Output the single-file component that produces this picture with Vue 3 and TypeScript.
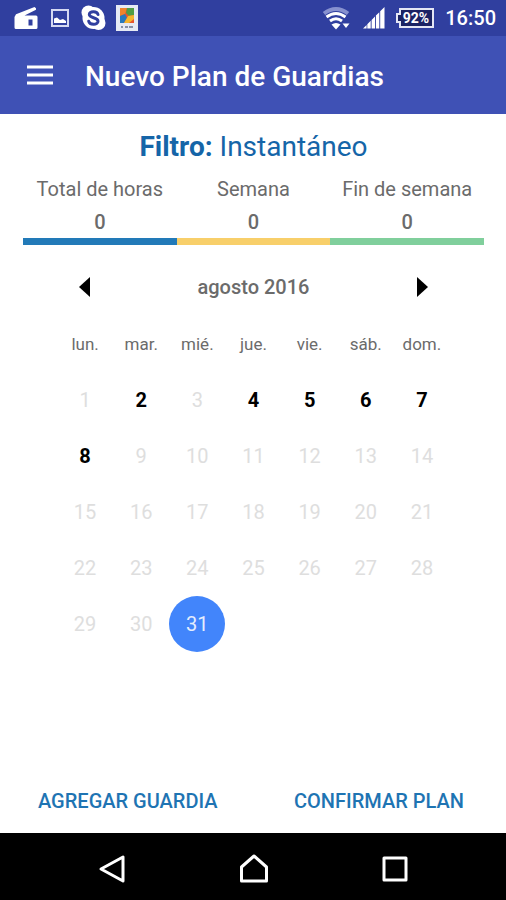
<script setup lang="ts">
import { computed, ref } from 'vue'

interface Total {
  label: string
  value: number
  tone: string
}

const totals: Total[] = [
  { label: 'Total de horas', value: 0, tone: 'blue' },
  { label: 'Semana', value: 0, tone: 'yellow' },
  { label: 'Fin de semana', value: 0, tone: 'green' },
]

const weekdays = ['lun.', 'mar.', 'mié.', 'jue.', 'vie.', 'sáb.', 'dom.']
const months = ['enero', 'febrero', 'marzo', 'abril', 'mayo', 'junio', 'julio', 'agosto', 'septiembre', 'octubre', 'noviembre', 'diciembre']
const shiftDays = new Set([2, 4, 5, 6, 7, 8])

const shown = ref(new Date(2016, 7, 1))
const selected = ref(31)

const monthLabel = computed(() => `${months[shown.value.getMonth()]} ${shown.value.getFullYear()}`)

const weeks = computed(() => {
  const year = shown.value.getFullYear()
  const month = shown.value.getMonth()
  const lead = (new Date(year, month, 1).getDay() + 6) % 7
  const count = new Date(year, month + 1, 0).getDate()
  const rows: (number | null)[][] = []
  for (let start = 1 - lead; start <= count; start += 7) {
    rows.push(weekdays.map((_, i) => (start + i >= 1 && start + i <= count ? start + i : null)))
  }
  return rows
})

function moveMonth(step: number) {
  shown.value = new Date(shown.value.getFullYear(), shown.value.getMonth() + step, 1)
}
</script>

<template>
  <div class="screen">
    <div class="status">
      <div class="status-group left">
        <svg width="26" height="26" viewBox="0 0 26 26" aria-hidden="true">
          <path fill="#fff" fill-rule="evenodd" d="M1.500 12 3 9.200 21.500 2l1.500 1.200v1.600L11.500 10.500H23a1.500 1.500 0 0 1 1.500 1.500v10.500A1.500 1.500 0 0 1 23 24H3a1.500 1.500 0 0 1-1.500-1.500zM15.500 14.500v6h4v-6z" />
        </svg>
        <svg class="picture" width="18" height="18" viewBox="0 0 18 18" aria-hidden="true">
          <rect x="1" y="1" width="16" height="16" fill="none" stroke="#d5d9f2" stroke-width="2" />
          <path fill="#fff" d="M3 14V9.500l3-1 3 2.500 3-1 3 2v2z" />
        </svg>
        <svg width="26" height="26" viewBox="0 0 26 26" aria-hidden="true">
          <circle cx="7.500" cy="7.500" r="7" fill="#fff" />
          <circle cx="17.500" cy="18" r="7" fill="#fff" />
          <circle cx="12.500" cy="13" r="11" fill="#fff" />
          <path d="M17 9.500C16 5.500 8 6 8.300 9.700c.3 3.800 8.700 2.300 8.700 6.500 0 4.300-8.500 4-9.300.1" fill="none" stroke="#303f9f" stroke-width="3" stroke-linecap="round" />
        </svg>
        <svg class="photo" width="24" height="26" viewBox="0 0 24 26" aria-hidden="true">
          <rect x="1" y="0" width="22" height="26" fill="#e6eaf4" />
          <rect x="5" y="3" width="14" height="15" fill="#e8552d" />
          <path fill="#ef842c" d="M5 3h7l-2 6-5 2z" />
          <path fill="#4f9d45" d="M12 3h7v7l-5 1-3-3z" />
          <path fill="#2879bd" d="m5 11 5-2 2 4-3 5H5z" />
          <path fill="#f4b62e" d="m13 11 6-1v4l-5 4H9z" />
          <path d="M6 22h2M10 22h3M14 22h4" stroke="#68738c" stroke-width="1.500" />
        </svg>
      </div>
      <div class="status-group right">
        <svg width="30" height="24" viewBox="0 0 30 24" aria-hidden="true">
          <path d="M2 7.500Q14-1.500 26 7.500" fill="none" stroke="#8791cf" stroke-width="4" />
          <path d="M4.500 11Q14 4 23.500 11M8 15q6-4.500 12 0" fill="none" stroke="#fff" stroke-width="3" />
          <path d="m9.500 18.500q4.500-3 9 0L14 23.500z" fill="#fff" />
          <path d="M20.500 17.500h7L24 22z" fill="#fff" />
        </svg>
        <svg class="signal" width="22" height="22" viewBox="0 0 22 22" aria-hidden="true">
          <path fill="#fff" d="m0 21.500 3.600-3.600v3.600zM4.300 17.200l3.400-3.400v7.700H4.300zM8.600 12.900 12 9.500v12H8.600zM12.900 8.600l3.400-3.400v16.300h-3.400zM17.200 4.300 21.500 0v21.500h-4.300z" />
        </svg>
        <svg class="battery" width="42" height="22" viewBox="0 0 42 22" role="img" aria-label="92%">
          <path d="M6 2h33v18H6v-5H3V7h3z" fill="#1b2364" stroke="#e4e6f4" stroke-width="2" />
          <text x="22" y="16" text-anchor="middle" class="battery-text">92%</text>
        </svg>
        <time class="clock">16:50</time>
      </div>
    </div>

    <header class="app-bar">
      <button class="menu" type="button" aria-label="Menú">
        <svg width="28" height="22" viewBox="0 0 28 22" aria-hidden="true">
          <path d="M1 3h26M1 11h26M1 19h26" stroke="#fff" stroke-width="3" />
        </svg>
      </button>
      <h1>Nuevo Plan de Guardias</h1>
    </header>

    <main>
      <h2><b>Filtro:</b> Instantáneo</h2>
      <dl class="totals">
        <div v-for="total in totals" :key="total.label" class="total" :class="total.tone">
          <dt>{{ total.label }}</dt>
          <dd>{{ total.value }}</dd>
        </div>
      </dl>

      <section class="calendar">
        <div class="month">
          <button type="button" aria-label="Mes anterior" @click="moveMonth(-1)">
            <svg width="12" height="20" viewBox="0 0 12 20" aria-hidden="true"><path d="M11 0v20L0 10z" /></svg>
          </button>
          <h3>{{ monthLabel }}</h3>
          <button type="button" aria-label="Mes siguiente" @click="moveMonth(1)">
            <svg width="12" height="20" viewBox="0 0 12 20" aria-hidden="true"><path d="M1 0v20l11-10z" /></svg>
          </button>
        </div>
        <table>
          <thead>
            <tr>
              <th v-for="name in weekdays" :key="name" scope="col">{{ name }}</th>
            </tr>
          </thead>
          <tbody>
            <tr v-for="(week, w) in weeks" :key="w">
              <td v-for="(day, d) in week" :key="d">
                <button
                  v-if="day"
                  class="day"
                  :class="{ shift: shiftDays.has(day), selected: day === selected }"
                  type="button"
                  @click="selected = day"
                >{{ day }}</button>
              </td>
            </tr>
          </tbody>
        </table>
      </section>

      <div class="actions">
        <button type="button">AGREGAR GUARDIA</button>
        <button type="button">CONFIRMAR PLAN</button>
      </div>
    </main>

    <nav class="system-nav">
      <button type="button" aria-label="Atrás">
        <svg width="30" height="30" viewBox="0 0 30 30" aria-hidden="true"><path d="M25 3v24L3 15z" /></svg>
      </button>
      <button type="button" aria-label="Inicio">
        <svg width="30" height="30" viewBox="0 0 30 30" aria-hidden="true"><path d="M2.500 13 15 2l12.500 11v14h-25z" /></svg>
      </button>
      <button type="button" aria-label="Recientes">
        <svg width="30" height="30" viewBox="0 0 30 30" aria-hidden="true"><rect x="4" y="4" width="22" height="22" /></svg>
      </button>
    </nav>
  </div>
</template>

<style>
body {
  margin: 0;
  background: #fff;
}
</style>

<style scoped>
.screen {
  display: flex;
  flex-direction: column;
  min-height: 100vh;
  font-family: Roboto, "Liberation Sans", sans-serif;
  color: #6b6b6b;
}
button {
  display: flex;
  align-items: center;
  justify-content: center;
  padding: 0;
  border: 0;
  background: none;
  color: inherit;
  font: inherit;
  cursor: pointer;
}
svg {
  display: block;
  flex: none;
}
h1, h2, h3, dl, dd {
  margin: 0;
}
.status {
  display: flex;
  align-items: center;
  justify-content: space-between;
  height: 36px;
  padding: 0 10px 0 13px;
  background: #303f9f;
}
.status-group {
  display: flex;
  align-items: center;
}
.left {
  gap: 12px;
}
.photo {
  margin-left: -4px;
}
.right {
  gap: 9px;
}
.signal {
  margin-left: 2px;
}
.battery-text {
  fill: #fff;
  font-size: 14px;
  font-weight: 700;
}
.clock {
  color: #fff;
  font-size: 20px;
  line-height: 38px;
  font-weight: 500;
}
.app-bar {
  display: flex;
  align-items: center;
  gap: 31px;
  height: 78px;
  padding: 0 26px;
  background: #3f51b5;
  color: #fff;
}
h1 {
  padding-top: 4px;
  font-size: 28px;
  line-height: 32px;
  font-weight: 500;
}
main {
  display: flex;
  flex: 1;
  flex-direction: column;
  padding: 17px 22px 8px 23px;
}
h2 {
  color: #1565a8;
  font-size: 28px;
  line-height: 32px;
  font-weight: 400;
  text-align: center;
}
.totals {
  display: flex;
  margin-top: 10px;
}
.total {
  flex: 1;
  border-bottom: 7px solid;
  text-align: center;
}
.blue {
  border-color: #227ab8;
}
.yellow {
  border-color: #f8cf6a;
}
.green {
  border-color: #80cf9c;
}
dt, dd {
  color: #6b6b6b;
  font-size: 20px;
  line-height: 33px;
}
dd {
  line-height: 32px;
  font-weight: 500;
}
.calendar {
  padding: 13px 34px 0;
}
.month {
  display: flex;
  align-items: center;
  justify-content: space-between;
}
.month button {
  width: 56px;
  height: 56px;
}
h3 {
  padding-top: 1px;
  font-size: 20px;
  line-height: 56px;
  font-weight: 500;
}
table {
  width: 100%;
  table-layout: fixed;
  border-collapse: collapse;
}
th, td {
  height: 56px;
  padding: 0;
}
th {
  height: 57px;
  font-size: 17px;
  font-weight: 400;
  text-align: center;
}
.day {
  width: 56px;
  height: 56px;
  margin: 0 auto;
  border-radius: 50%;
  color: #dedede;
  font-size: 20px;
}
.shift {
  color: #000;
  font-weight: 700;
}
.selected {
  background: #4285fb;
  color: #e4edfd;
}
.actions {
  display: flex;
  justify-content: space-between;
  margin-top: auto;
  padding: 0 20px 0 15px;
}
.actions button {
  height: 48px;
  color: #1e74b3;
  font-size: 20px;
  font-weight: 500;
}
.system-nav {
  display: flex;
  justify-content: center;
  gap: 85px;
  padding: 8px 0 3px 2px;
  background: #000;
}
.system-nav button {
  width: 56px;
  height: 56px;
}
.system-nav path,
.system-nav rect {
  fill: none;
  stroke: #fff;
  stroke-width: 3;
  stroke-linejoin: round;
}
</style>
